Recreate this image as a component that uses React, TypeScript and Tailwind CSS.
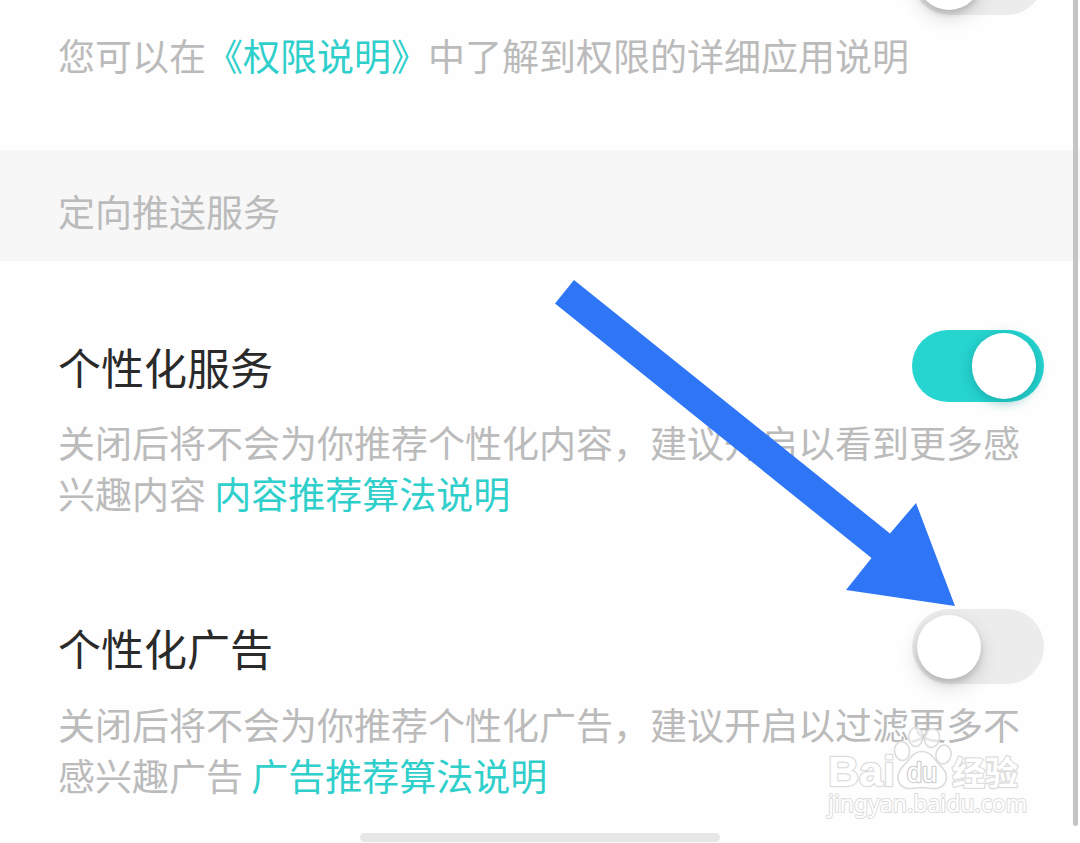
import type { ReactNode } from "react";

type SwitchProps = {
  id: string;
  label?: string;
  defaultChecked?: boolean;
};

function Switch({ id, label, defaultChecked = false }: SwitchProps) {
  return (
    <input
      id={id}
      type="checkbox"
      role="switch"
      aria-label={label}
      defaultChecked={defaultChecked}
      className="flex h-[75px] w-[132px] shrink-0 cursor-pointer appearance-none items-center rounded-full bg-[#ececec] px-[5px] before:h-16 before:w-16 before:rounded-full before:bg-white before:shadow-[0_8px_20px_rgba(0,0,0,0.14),0_4px_6px_rgba(0,0,0,0.14)] before:content-[''] checked:h-[72px] checked:justify-end checked:bg-[#26d4d0] checked:px-2 checked:before:h-[66px] checked:before:shadow-[0_3px_12px_rgba(10,130,130,0.5)]"
    />
  );
}

function TextLink({ children }: { children: ReactNode }) {
  return (
    <a href="#" className="text-[#2fcfcb]">
      {children}
    </a>
  );
}

type SettingProps = {
  id: string;
  title: string;
  defaultChecked?: boolean;
  children: ReactNode;
};

function Setting({ id, title, defaultChecked, children }: SettingProps) {
  return (
    <section>
      <div className="flex items-center justify-between pr-9 pl-[58px]">
        <label htmlFor={id} className="text-[43px] leading-[60px] text-[#2a2a2a]">
          {title}
        </label>
        <Switch id={id} defaultChecked={defaultChecked} />
      </div>
      <p className="mt-[15px] pr-[50px] pl-[58px] text-[37px] leading-[51px] text-[#bbbbbb]">{children}</p>
    </section>
  );
}

function Arrow() {
  return (
    <svg
      aria-hidden="true"
      viewBox="0 0 401 326"
      className="pointer-events-none absolute top-[280px] right-[124px] w-[401px]"
    >
      <path d="M19 0 335 253.500 361 223 400 326 291 310 316.500 278 0 23.500Z" fill="#2f76f6" />
    </svg>
  );
}

function Watermark() {
  return (
    <svg
      viewBox="0 0 210 100"
      className="pointer-events-none absolute right-[45px] bottom-[18px] w-[210px]"
      fill="#ffffff"
      stroke="#dcdcdc"
      strokeWidth="1.6"
      strokeLinejoin="round"
    >
      <g fillOpacity="0.65">
        <ellipse cx="77" cy="27" rx="7.500" ry="9.500" transform="rotate(-8 77 27)" />
        <ellipse cx="90.700" cy="13" rx="7" ry="9.500" />
        <ellipse cx="107" cy="14" rx="7.500" ry="9.500" transform="rotate(12 107 14)" />
        <ellipse cx="118.500" cy="30.500" rx="7.500" ry="9.500" transform="rotate(12 118.500 30.500)" />
      </g>
      <path d="M97 27.500c8 0 11 5.500 15 10.500 4 4.500 9.500 8 9.500 15 0 7-5 11.500-12 11.500-5 0-8-1-12.500-1s-7.500 1-12.500 1c-7 0-11.500-4.500-11.500-11.500 0-7 5-10.500 9-15 4-5 7-10.500 15-10.500Z" />
      <g paintOrder="stroke" strokeWidth="2.500">
        <text x="3" y="62" fontFamily="Liberation Sans, Arial, sans-serif" fontWeight="700" fontSize="43">
          Bai
        </text>
        <text x="82" y="58" fontFamily="Liberation Sans, Arial, sans-serif" fontSize="27" stroke="#cfcfcf">
          du
        </text>
        <text x="127" y="61" fontFamily="Noto Sans CJK SC, sans-serif" fontWeight="700" fontSize="33">
          经验
        </text>
        <text x="3" y="88" fontFamily="Noto Sans, sans-serif" fontSize="23" strokeWidth="2">
          jingyan.baidu.com
        </text>
      </g>
    </svg>
  );
}

export default function App() {
  return (
    <main className="relative overflow-hidden bg-[#fefefe] font-['Noto_Sans_CJK_SC',sans-serif] font-normal">
      <section className="pb-[69px]">
        <div className="-mt-[60px] flex justify-end pr-9">
          <Switch id="permission" label="权限说明" />
        </div>
        <p className="mt-[15px] pr-[50px] pl-[58px] text-[37px] leading-[51px] text-[#bbbbbb]">
          您可以在<TextLink>《权限说明》</TextLink>中了解到权限的详细应用说明
        </p>
      </section>

      <h2 className="bg-[#f7f7f7] pt-9 pr-[50px] pb-6 pl-[58px] text-[37px] leading-[51px] font-normal text-[#bbbbbb]">
        定向推送服务
      </h2>

      <div className="flex flex-col gap-[90px] pt-[69px]">
        <Setting id="service" title="个性化服务" defaultChecked>
          关闭后将不会为你推荐个性化内容，建议开启以看到更多感兴趣内容 <TextLink>内容推荐算法说明</TextLink>
        </Setting>
        <Setting id="ads" title="个性化广告">
          关闭后将不会为你推荐个性化广告，建议开启以过滤更多不感兴趣广告 <TextLink>广告推荐算法说明</TextLink>
        </Setting>
      </div>

      <div className="mx-auto mt-8 h-[9px] w-1/3 rounded-full bg-[#e7e7e7]" />

      <div className="pointer-events-none absolute top-0 right-0.5 bottom-4 w-[5px] rounded-b-full bg-[#c3c5c4]" />
      <Arrow />
      <Watermark />
    </main>
  );
}
